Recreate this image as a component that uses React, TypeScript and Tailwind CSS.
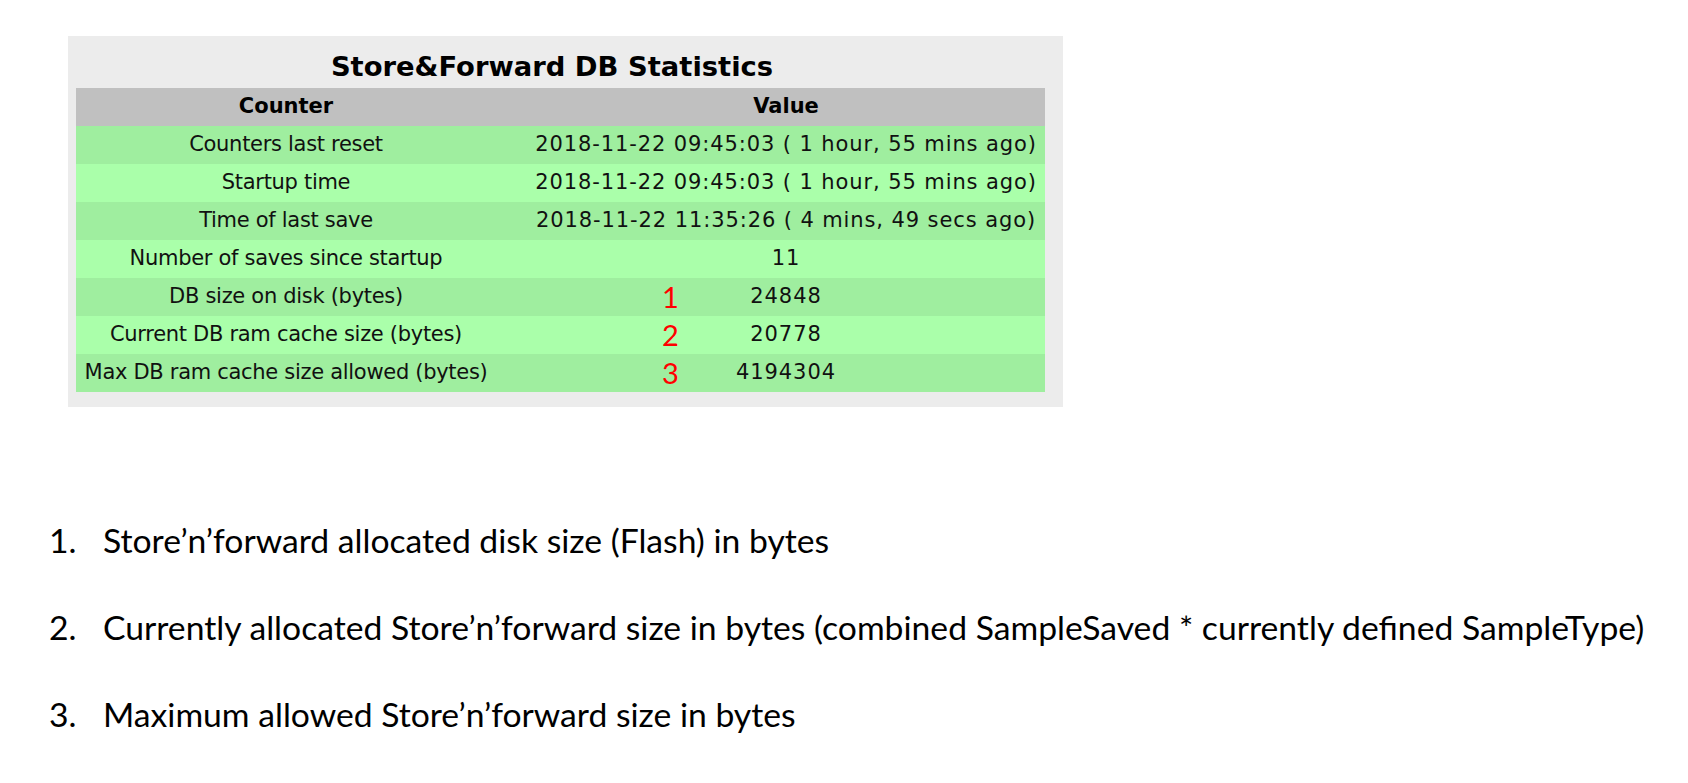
import React from 'react'

type Row = { label: string; value: string; mark?: string }

const rows: Row[] = [
  { label: 'Counters last reset', value: '2018-11-22 09:45:03 ( 1 hour, 55 mins ago)' },
  { label: 'Startup time', value: '2018-11-22 09:45:03 ( 1 hour, 55 mins ago)' },
  { label: 'Time of last save', value: '2018-11-22 11:35:26 ( 4 mins, 49 secs ago)' },
  { label: 'Number of saves since startup', value: '11' },
  { label: 'DB size on disk (bytes)', value: '24848', mark: '1' },
  { label: 'Current DB ram cache size (bytes)', value: '20778', mark: '2' },
  { label: 'Max DB ram cache size allowed (bytes)', value: '4194304', mark: '3' },
]

const notes = [
  'Store’n’forward allocated disk size (Flash) in bytes',
  'Currently allocated Store’n’forward size in bytes (combined SampleSaved * currently defined SampleType)',
  'Maximum allowed Store’n’forward size in bytes',
]

const App: React.FC = () => {
  return (
    <div className="min-h-screen bg-white pt-[36px]">
      {/* stats panel */}
      <div className="ml-[68px] w-[995px] bg-[#ececec] pl-[8px] pr-[18px] pb-[15px] font-['DejaVu_Sans',sans-serif] text-[#111]">
        <h2 className="h-[52px] flex items-center justify-center pt-[9px] pr-[17px] text-[27.4px] font-bold text-black">
          Store&amp;Forward DB Statistics
        </h2>
        <div className="grid grid-cols-[420px_1fr] h-[38px] items-center bg-[#c0c0c0] text-[21px] font-bold text-black">
          <div className="text-center">Counter</div>
          <div className="text-center pl-[31px]">Value</div>
        </div>
        {rows.map((row, i) => (
          <div
            key={row.label}
            className={`relative grid grid-cols-[420px_1fr] h-[38px] items-center text-[21px] ${
              i % 2 === 0 ? 'bg-[#9fee9f]' : 'bg-[#aaffaa]'
            }`}
          >
            <div className="text-center tracking-[-0.3px]">{row.label}</div>
            <div className="text-center pl-[31px] tracking-[0.9px]">{row.value}</div>
            {row.mark && (
              <span className="absolute left-[586px] top-[0px] font-['Lato',sans-serif] text-[29px] leading-[38px] text-[#ff0000]">
                {row.mark}
              </span>
            )}
          </div>
        ))}
      </div>

      {/* footnotes */}
      <ol className="mt-[90px] font-['Lato',sans-serif] text-[33.7px] text-black">
        {notes.map((note, i) => (
          <li key={i} className="flex h-[87px] items-center">
            <span className="w-[103px] pl-[49px]">{i + 1}.</span>
            <span>{note}</span>
          </li>
        ))}
      </ol>
    </div>
  )
}

export default App
